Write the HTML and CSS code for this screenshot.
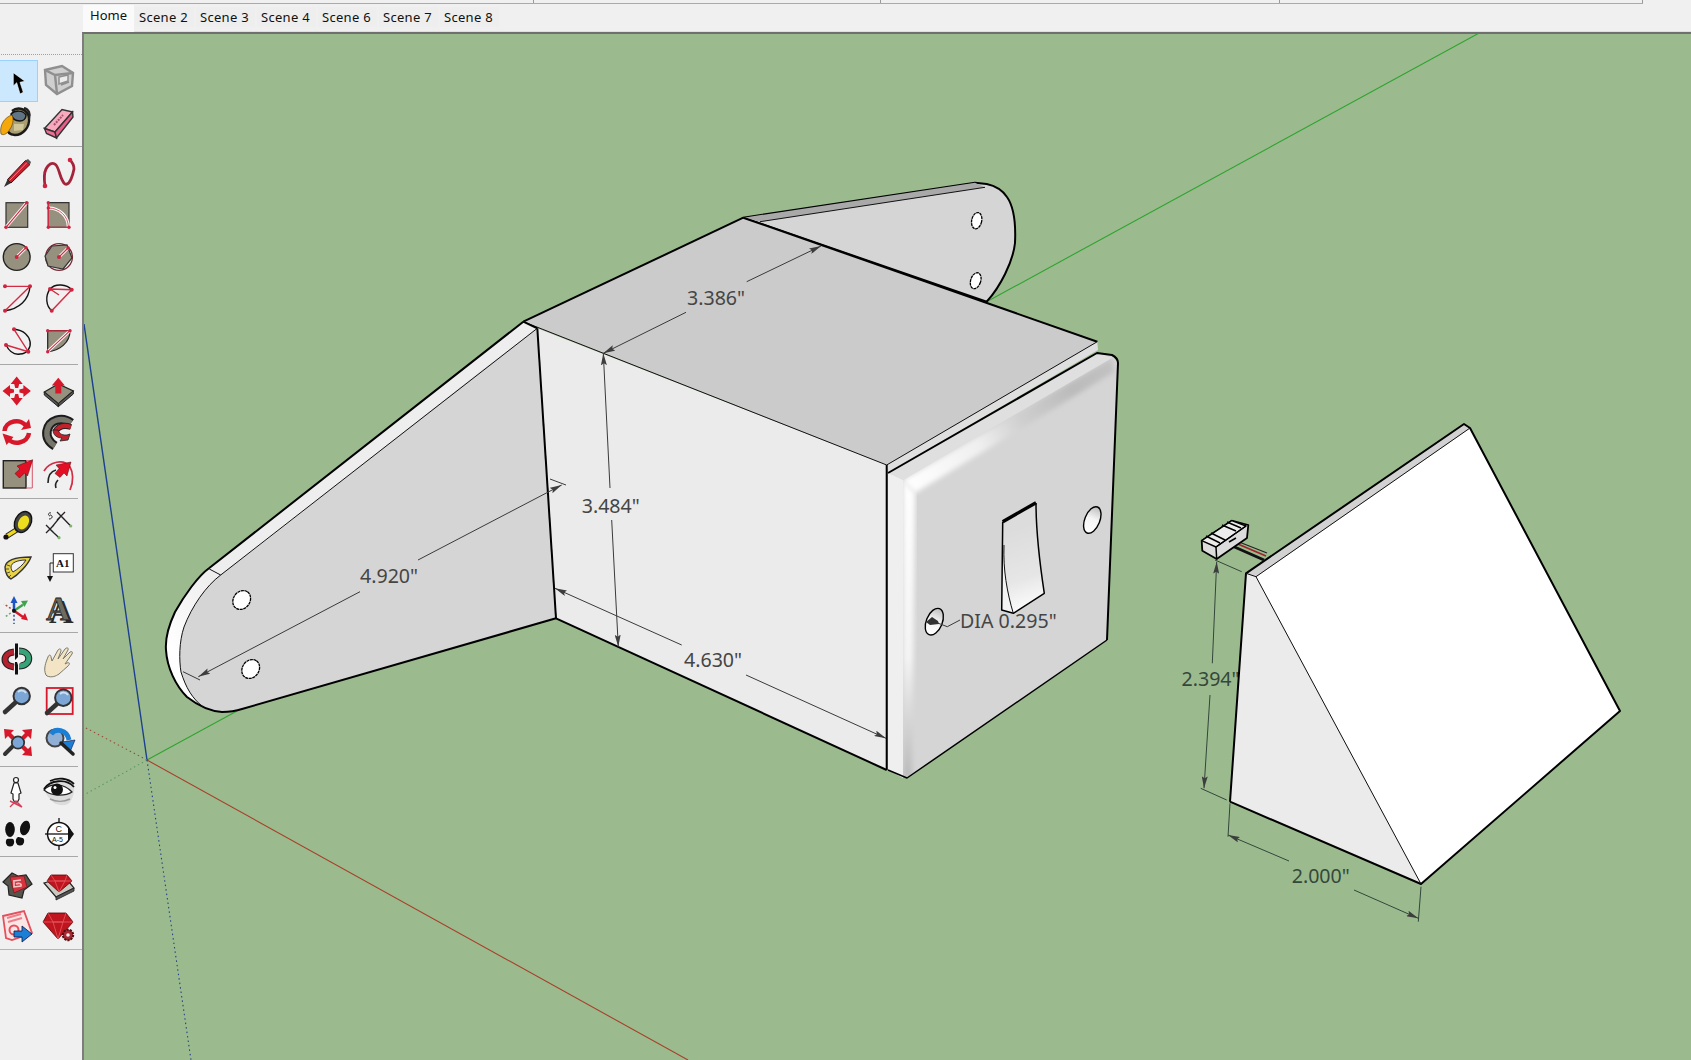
FILE: index.html
```html
<!DOCTYPE html>
<html lang="en">
<head>
<meta charset="utf-8">
<title>SketchUp</title>
<link rel="stylesheet" href="styles.css">
</head>
<body>
<div class="app">
  <header class="top">
    <div class="menuline">
      <span class="mcell mcell-a"></span><span class="mcell mcell-b"></span><span class="mcell mcell-c"></span><span class="mcell mcell-d"></span>
    </div>
    <nav class="tabs">
      <span class="tab tab-active">Home</span>
      <span class="tab">Scene 2</span>
      <span class="tab">Scene 3</span>
      <span class="tab">Scene 4</span>
      <span class="tab">Scene 6</span>
      <span class="tab">Scene 7</span>
      <span class="tab">Scene 8</span>
    </nav>
  </header>
  <div class="main">
    <aside class="toolbar">
      <div class="group">
        <div class="tool active"><svg class="ic" viewBox="0 0 34 34"><path d="M13.300 8.700V22l3.400-3.300L20 30l3.300-1.700-3.300-10 5-1z" fill="#000" stroke="#fff" stroke-width=".6"/></svg></div>
        <div class="tool"><svg class="ic" viewBox="0 0 34 34"><g fill="none" stroke="#8f8f8f" stroke-width="2.400"><path d="M3 6l17-4 11 7-1 13-15 8-11-9z" fill="#cfcfcf"/><path d="M3 6l10 5 18-2M13 11l2 19"/><path d="M17 13l9-2v6l-9 3zM19 21l8-3" stroke-width="1.500" fill="#ececec"/></g></svg></div>
        <div class="tool"><svg class="ic" viewBox="0 0 34 34"><path d="M12 5C18 0 28 3 29 12c1 9-6 17-14 17-6 0-8-4-8-8" fill="#a89e72" stroke="#1a1a1a" stroke-width="2.400"/><path d="M14 18h10l-1 6-9 1z" fill="#cfc69a"/><path d="M11 8c4-4 12-4 15 1 0 4-3 6-6 6-5 0-8-3-9-7z" fill="#5f7485" stroke="#111" stroke-width="1.500"/><path d="M24 2c5 1 7 6 5 11" fill="none" stroke="#222" stroke-width="2"/><path d="M1 28C-1 19 5 11 12 9c2 4 1 10-2 14-2 4-6 7-9 5z" fill="#f4a80b" stroke="#5a3a00" stroke-width=".6"/></svg></div>
        <div class="tool"><svg class="ic" viewBox="0 0 34 34"><path d="M2.500 22.500L20 3.500l10.500 2.500L13 26z" fill="#f8a9bd" stroke="#333" stroke-width="1.400"/><path d="M2.500 22.500L13 26l1.500 6-10-4.500z" fill="#ee6f94" stroke="#333" stroke-width="1.400"/><path d="M13 26L30.500 6l.5 5-16.500 21z" fill="#e85e88" stroke="#333" stroke-width="1.400"/><path d="M12 19l9-10" stroke="#a4546c" stroke-width="2" stroke-dasharray="2 1"/></svg></div>
      </div>
      <div class="group">
        <div class="tool"><svg class="ic" viewBox="0 0 34 34"><path d="M4 31l3.500-7.500 3.500 3.500z" fill="#333"/><path d="M7.500 23.500L25.500 4.500l4.500 4-19 18.500z" fill="#c4202e" stroke="#411" stroke-width="1"/><path d="M9.500 24.500l17.500-18" stroke="#f08090" stroke-width="1"/><path d="M25.500 4.500l2.500-1.500 3 3-1 2.500z" fill="#555"/></svg></div>
        <div class="tool"><svg class="ic" viewBox="0 0 34 34"><path d="M3 30C2 23 2 17 4 13 6 9 10 5 14 9 18 14 18 24 23 28 28 30 31 18 32 13 32 8 30 6 28 4" fill="none" stroke="#a4243b" stroke-width="2.800"/><circle cx="3" cy="30" r="2.300" fill="#d0233f"/><circle cx="28" cy="4" r="2.300" fill="#d0233f"/></svg></div>
        <div class="tool"><svg class="ic" viewBox="0 0 34 34"><rect x="6" y="4.700" width="21.700" height="24.600" fill="#96917f" stroke="#333" stroke-width="1.200"/><path d="M6 29.300L26.700 4.700" stroke="#fff" stroke-width="3"/><path d="M6 29.300L26.700 4.700" stroke="#d22b44" stroke-width="1.200"/><circle cx="6" cy="29.300" r="1.800" fill="#d0233f"/><circle cx="26.700" cy="4.700" r="1.800" fill="#d0233f"/></svg></div>
        <div class="tool"><svg class="ic" viewBox="0 0 34 34"><path d="M6.300 4.700H27v24.600H6.300z" fill="#96917f" stroke="#333" stroke-width="1.200"/><path d="M6.300 10c11 0 20 8 20 19" fill="none" stroke="#fff" stroke-width="3"/><path d="M6.300 10c11 0 20 8 20 19" fill="none" stroke="#d8566a" stroke-width="1"/><path d="M6.300 4.700v24.600H27" fill="none" stroke="#d22b44" stroke-width="1.300"/><g fill="#d0233f"><circle cx="6.300" cy="4.700" r="1.700"/><circle cx="6.300" cy="10" r="1.700"/><circle cx="6.300" cy="29.300" r="1.700"/><circle cx="27" cy="29.300" r="1.700"/></g></svg></div>
        <div class="tool"><svg class="ic" viewBox="0 0 34 34"><circle cx="16.700" cy="17" r="13.400" fill="#96917f" stroke="#222" stroke-width="1.400"/><path d="M16.700 17L26 7.700" stroke="#fff" stroke-width="3"/><path d="M16.700 17L26 7.700" stroke="#d22b44" stroke-width="1.200"/><circle cx="16.700" cy="17" r="2" fill="#d0233f"/><circle cx="26" cy="7.700" r="1.800" fill="#d0233f"/></svg></div>
        <div class="tool"><svg class="ic" viewBox="0 0 34 34"><circle cx="17" cy="17" r="13.400" fill="none" stroke="#7a2a36" stroke-width="1.300"/><path d="M10 6l15-1 5 13-9 11-15-3-3-10z" fill="#96917f" stroke="#333" stroke-width="1.200"/><path d="M17 17l9-9" stroke="#fff" stroke-width="3"/><path d="M17 17l9-9" stroke="#d22b44" stroke-width="1.200"/><circle cx="17" cy="17" r="2" fill="#d0233f"/><circle cx="26" cy="8" r="1.800" fill="#d0233f"/></svg></div>
        <div class="tool"><svg class="ic" viewBox="0 0 34 34"><path d="M30 5.300C29 19 19 28 5 29.700" fill="none" stroke="#111" stroke-width="1.400"/><path d="M5 5.300h25L5 29.700" fill="none" stroke="#d22b44" stroke-width="1.300"/><g fill="#d0233f"><circle cx="5" cy="5.300" r="2"/><circle cx="30" cy="5.300" r="2"/><circle cx="5" cy="29.700" r="2"/></g></svg></div>
        <div class="tool"><svg class="ic" viewBox="0 0 34 34"><path d="M8 8C13 2 25 3 29.700 8.700M8 8C3 15 4 25 9.700 29.700" fill="none" stroke="#111" stroke-width="1.400"/><path d="M8 8l21.700.7L9.700 29.700M8 8l9 6" fill="none" stroke="#d22b44" stroke-width="1.500"/><g fill="#d0233f"><circle cx="8" cy="8" r="2"/><circle cx="29.700" cy="8.700" r="2"/><circle cx="9.700" cy="29.700" r="2"/></g></svg></div>
        <div class="tool"><svg class="ic" viewBox="0 0 34 34"><path d="M14 6.300C34 8 35 30 20 31 14 32 9 28 6 22" fill="none" stroke="#111" stroke-width="1.400"/><path d="M14 6.300l14.300 22.400L6 22" fill="none" stroke="#d22b44" stroke-width="1.400"/><g fill="#d0233f"><circle cx="14" cy="6.300" r="2"/><circle cx="28.300" cy="28.700" r="2"/><circle cx="6" cy="22" r="2"/></g></svg></div>
        <div class="tool"><svg class="ic" viewBox="0 0 34 34"><path d="M5.700 7.700H28C28 19 18 28 5.700 28.700z" fill="#96917f" stroke="#222" stroke-width="1.200"/><path d="M5.700 28.700L28 7.700" stroke="#fff" stroke-width="3"/><path d="M5.700 28.700L28 7.700M5.700 7.700H28" stroke="#d22b44" stroke-width="1.100"/><g fill="#d0233f"><circle cx="5.700" cy="7.700" r="1.700"/><circle cx="28" cy="7.700" r="1.700"/><circle cx="5.700" cy="28.700" r="1.700"/></g></svg></div>
      </div>
      <div class="group">
        <div class="tool"><svg class="ic" viewBox="0 0 34 34"><g fill="#d7182a"><path d="M16.700 2.500l6 7.500h-3.500l-1 4h-3l-1-4h-3.500z"/><path d="M16.700 31.500l6-7.500h-3.500l-1-4h-3l-1 4h-3.500z"/><path d="M2.500 17l7.500-6v3.500l4 1v3l-4 1v3.500z"/><path d="M30.900 17l-7.500-6v3.500l-4 1v3l4 1v3.500z"/></g></svg></div>
        <div class="tool"><svg class="ic" viewBox="0 0 34 34"><path d="M2.300 18l14-8 15 7-15 12.700z" fill="#96917f" stroke="#222" stroke-width="1.200"/><path d="M2.300 18v3l14 11.700v-3zM16.300 29.700v3l15-12.700v-3z" fill="#555" stroke="#222" stroke-width="1"/><path d="M16.300 3.700l6.500 7.800h-3.500v8h-6v-8H9.800z" fill="#d7182a"/></svg></div>
        <div class="tool"><svg class="ic" viewBox="0 0 34 34"><path d="M4.500 16C5 6 21 2 27 12" fill="none" stroke="#d7182a" stroke-width="4.500"/><path d="M21 15l10-2-2-9z" fill="#d7182a"/><path d="M29 18C28 28 12 32 7 22" fill="none" stroke="#d7182a" stroke-width="4.500"/><path d="M2.500 18.500l11 3.500-7 8z" fill="#d7182a"/></svg></div>
        <div class="tool"><svg class="ic" viewBox="0 0 34 34"><path d="M29 8C20 1 7 5 5 16c-1 7 3 12 8 15" fill="none" stroke="#1c1c1c" stroke-width="9.500"/><path d="M29 8C20 1 7 5 5 16c-1 7 3 12 8 15" fill="none" stroke="#77766a" stroke-width="5.500"/><path d="M13 17c4-7 10-7 16-5" fill="none" stroke="#222" stroke-width="6"/><path d="M13 17c4-7 10-7 16-5" fill="none" stroke="#c3202b" stroke-width="4"/><path d="M11 15c0 5 4 8 9 8l-2 3 8-1 2-6-3 1c-4 0-7 0-9-5z" fill="#c3202b" stroke="#222" stroke-width=".8"/></svg></div>
        <div class="tool"><svg class="ic" viewBox="0 0 34 34"><rect x="3.300" y="3.700" width="22.700" height="27.300" fill="#96917f" stroke="#222" stroke-width="1.400"/><path d="M26 3.700h6.300V31H26" fill="none" stroke="#d8566a" stroke-width="1"/><path d="M32.700 2.700L17 9l3 3-5 4.500 4.500 4.500 5-5 3 3z" fill="#e30f24" stroke="#411" stroke-width=".5"/></svg></div>
        <div class="tool"><svg class="ic" viewBox="0 0 34 34"><path d="M2 14C7 5 22 1 28 10c3 5 4 14 0 23" fill="none" stroke="#d22b44" stroke-width="1.700"/><path d="M6 26c0-8 4-12 8-13M14 31c-1-3 0-6 2-8" fill="none" stroke="#222" stroke-width="1.600"/><path d="M29 5L14 8l3 3.500-4 5 5 4 4-4.500 3 3z" fill="#e30f24" stroke="#411" stroke-width=".5"/></svg></div>
      </div>
      <div class="group group-low">
        <div class="tool"><svg class="ic" viewBox="0 0 34 34"><path d="M7 27L18 20" stroke="#222" stroke-width="5.500"/><path d="M7 27L18 20" stroke="#eed71c" stroke-width="3.500"/><circle cx="6" cy="28" r="2.600" fill="#111"/><ellipse cx="23" cy="13" rx="8" ry="11" transform="rotate(28 23 13)" fill="#444" stroke="#111" stroke-width="1.400"/><ellipse cx="23.500" cy="13.500" rx="5" ry="7.500" transform="rotate(28 23.500 13.500)" fill="#ecde1e"/></svg></div>
        <div class="tool"><svg class="ic" viewBox="0 0 34 34"><path d="M8 20.300L19 7M4 16l8 8M4 24l8-8M15 11l8-8M15 3l8 8M19 7l9.700 10M8 20.300L17 28.700" stroke="#222" stroke-width="1.300" fill="none"/><path d="M8 7c-3-1-1-4 1-3M8 6c3 0 3 4-1 4" fill="none" stroke="#222" stroke-width="1"/><circle cx="28.700" cy="17" r="1.600" fill="#7fb46f"/><circle cx="17" cy="28.700" r="1.600" fill="#7fb46f"/></svg></div>
        <div class="tool"><svg class="ic" viewBox="0 0 34 34"><path d="M31 7C18 7 6 9 5 17c0 6 3 11 6 12C18 25 28 15 31 7z" fill="#e8d348" stroke="#333" stroke-width="1.400"/><path d="M26 10C17 10 11 13 11 17c0 2 1 4 2 5 5-3 10-7 13-12z" fill="#f2f2f2" stroke="#333" stroke-width="1"/><path d="M7 15l3 1M6 19l3 0M7 23l3-1M9 27l2-2" stroke="#333" stroke-width=".8"/></svg></div>
        <div class="tool"><svg class="ic" viewBox="0 0 34 34"><rect x="11.300" y="3.700" width="20" height="18.300" fill="#fff" stroke="#333" stroke-width="1"/><text class="ic-a1" x="14" y="16.500">A1</text><path d="M11.300 13H8v14" fill="none" stroke="#222" stroke-width="1"/><path d="M5 26h6l-3 6z" fill="#111"/></svg></div>
        <div class="tool"><svg class="ic" viewBox="0 0 34 34"><path d="M14 18.700L4 12" stroke="#b34a3a" stroke-width="1.500" stroke-dasharray="2 2"/><path d="M14 18.700L5 25" stroke="#6ea26a" stroke-width="1.500" stroke-dasharray="2 2"/><path d="M14 18.700V32" stroke="#2d4f9a" stroke-width="1.500" stroke-dasharray="2 2"/><path d="M14 18.700V9" stroke="#1d55c4" stroke-width="2.500"/><path d="M10.500 11L14 4l3.500 7z" fill="#1d55c4"/><path d="M14 18.700l9-6" stroke="#3fa24e" stroke-width="2.500"/><path d="M21 9l7-.5-3.500 6.500z" fill="#3fa24e"/><path d="M14 18.700L23 25" stroke="#d7182a" stroke-width="2.500"/><path d="M25 21l3 7.500-7-1.500z" fill="#d7182a"/><circle cx="14" cy="18.700" r="2" fill="#111"/></svg></div>
        <div class="tool"><svg class="ic" viewBox="0 0 34 34"><text class="ic-3d ic-3d-back" x="7" y="31">A</text><text class="ic-3d ic-3d-front" x="4" y="28">A</text></svg></div>
      </div>
      <div class="group">
        <div class="tool"><svg class="ic" viewBox="0 0 34 34"><path d="M14 10C2 11 2 24 14 25" fill="none" stroke="#222" stroke-width="7"/><path d="M14 10C2 11 2 24 14 25" fill="none" stroke="#b7202f" stroke-width="4.800"/><path d="M19 9C32 9 32 24 19 24" fill="none" stroke="#222" stroke-width="7"/><path d="M19 9C32 9 32 24 19 24" fill="none" stroke="#37a377" stroke-width="4.800"/><path d="M16.500 1.500V32.500" stroke="#111" stroke-width="3"/><path d="M13 20l5-5 1 4 5-2-6 6-1-3z" fill="#f6f6f6"/></svg></div>
        <div class="tool"><svg class="ic" viewBox="0 0 34 34"><path d="M4 33C1 27 4 20 6 15c1-3 3-2 3 0l1 4 6-11c2-2 3-1 3 1l-3 8 7-10c2-2 4-1 3 1l-5 9 7-7c2-1 3 0 2 2l-7 10 2-1c3-1 3 1 1 3-3 3-6 5-9 8-3 2-7 4-12 2z" fill="#f3e4c6" stroke="#7a7a6a" stroke-width="1"/></svg></div>
        <div class="tool"><svg class="ic" viewBox="0 0 34 34"><path d="M16 19L5 29" stroke="#333" stroke-width="4.500" stroke-linecap="round"/><circle cx="21.700" cy="13" r="8.200" fill="#7ba6d6" stroke="#333" stroke-width="2"/><path d="M18 9c2-2 6-2 8 1" stroke="#cfe0f0" stroke-width="2" fill="none"/></svg></div>
        <div class="tool"><svg class="ic" viewBox="0 0 34 34"><rect x="4.700" y="5" width="26" height="26" fill="none" stroke="#d7182a" stroke-width="1.800"/><path d="M16 20L5 30" stroke="#333" stroke-width="4.500" stroke-linecap="round"/><circle cx="21.300" cy="14.700" r="8.200" fill="#7ba6d6" stroke="#333" stroke-width="2"/><path d="M18 11c2-2 6-2 8 1" stroke="#cfe0f0" stroke-width="2" fill="none"/></svg></div>
        <div class="tool"><svg class="ic" viewBox="0 0 34 34"><g fill="#d7182a"><path d="M4 4l10 1-3 3 3.500 3.500-3 3L8 11l-3 3z"/><path d="M32 4l-10 1 3 3-3.500 3.500 3 3L28 11l3 3z"/><path d="M32 31l-10-1 3-3-3.500-3.500 3-3L28 24l3-3z"/></g><path d="M13 21L5 29" stroke="#333" stroke-width="4" stroke-linecap="round"/><circle cx="18" cy="17.500" r="6.200" fill="#7ba6d6" stroke="#333" stroke-width="1.800"/></svg></div>
        <div class="tool"><svg class="ic" viewBox="0 0 34 34"><circle cx="13" cy="13" r="8.500" fill="#8fb0d4" stroke="#444" stroke-width="2"/><path d="M9 9C13 3 25 4 27 15" fill="none" stroke="#1b7fd6" stroke-width="5"/><path d="M20 17l13-2-5 12z" fill="#1b7fd6" stroke="#114" stroke-width=".6"/><path d="M19 18l12 11" stroke="#222" stroke-width="3.500" stroke-linecap="round"/></svg></div>
      </div>
      <div class="group group-tight">
        <div class="tool"><svg class="ic" viewBox="0 0 34 34"><circle cx="16" cy="5" r="2.500" fill="#fff" stroke="#222" stroke-width="1.200"/><path d="M14 8h4l3 10-2 1v5l-2 4h-2l-2-4v-5l-2-1z" fill="#fff" stroke="#222" stroke-width="1.200"/><path d="M10 32l6-6 6 6M10 26l12 6" fill="none" stroke="#d8405a" stroke-width="1.400"/></svg></div>
        <div class="tool"><svg class="ic" viewBox="0 0 34 34"><path d="M2 14C8 5 24 4 32 10c1 8-2 16-6 19-7 3-14 0-17-4-3-3-6-7-7-11z" fill="#dcdcdc"/><path d="M2 15C8 8 22 8 30 17 24 21 10 22 2 15z" fill="#fff" stroke="#222" stroke-width="1.200"/><circle cx="15" cy="14.500" r="6" fill="#111"/><circle cx="13" cy="12.500" r="1.500" fill="#fff"/><path d="M2 14C8 5 24 3 32 12M8 6c8-4 18-3 24 3" fill="none" stroke="#111" stroke-width="1.800"/><path d="M8 24c6 3 14 3 20 0" fill="none" stroke="#999" stroke-width="1.500"/></svg></div>
        <div class="tool"><svg class="ic" viewBox="0 0 34 34"><ellipse cx="10" cy="12.500" rx="4.800" ry="7.500" fill="#111"/><ellipse cx="10" cy="25" rx="4.200" ry="4.500" fill="#111"/><path d="M6 21h8" stroke="#fff" stroke-width="1.500"/><ellipse cx="25" cy="11" rx="4.800" ry="7.500" fill="#111" transform="rotate(17 25 11)"/><ellipse cx="20" cy="24" rx="4.200" ry="4.500" fill="#111"/><path d="M18 19l8 2" stroke="#fff" stroke-width="1.500"/></svg></div>
        <div class="tool"><svg class="ic" viewBox="0 0 34 34"><circle cx="17" cy="17" r="11.500" fill="#fff" stroke="#111" stroke-width="1.500"/><path d="M3 17h23" stroke="#111" stroke-width="1.300"/><path d="M26 9l6 8-6 8z" fill="#111"/><path d="M17 1v4M17 29v4" stroke="#111" stroke-width="1.300"/><text class="ic-sec" x="13.500" y="15">C</text><text class="ic-sec ic-sec-s" x="10" y="25">A-5</text></svg></div>
      </div>
      <div class="group group-last">
        <div class="tool"><svg class="ic" viewBox="0 0 34 34"><path d="M3 14L12 5l6 3 8-1 6 9-8 6-2 8-13-3-1-9z" fill="#55554c" stroke="#222" stroke-width="1.200"/><path d="M10 9L24 8l3 11-13 6z" fill="#d6333f" stroke="#7a1820" stroke-width=".8"/><path d="M13 13l8-1M14 13v6l7-1c1-3-3-3-5-2" fill="none" stroke="#f6c6c6" stroke-width="1.500"/></svg></div>
        <div class="tool"><svg class="ic" viewBox="0 0 34 34"><path d="M2 15l12 14 18-9-9-11z" fill="#c9c9c0" stroke="#222" stroke-width="1.200"/><path d="M14 29v3l18-9v-3z" fill="#555" stroke="#222" stroke-width=".8"/><path d="M9 7h16l5 6-13 11L5 13z" fill="#c0141f" stroke="#600" stroke-width=".8"/><path d="M9 7l4 6h10l2-6M5 13h25M13 13l4 11 6-11" fill="none" stroke="#e65a62" stroke-width=".8"/></svg></div>
        <div class="tool"><svg class="ic" viewBox="0 0 34 34"><path d="M3 7L24 2l8 22-20 7-6-2z" fill="#fbe6e6" stroke="#e4505c" stroke-width="1.800"/><path d="M7 9l14-4M8 13l14-4" stroke="#ec7f88" stroke-width="2"/><circle cx="14" cy="21" r="4.500" fill="none" stroke="#e4505c" stroke-width="2"/><path d="M14 22h8v-5l10 8-10 8v-5h-8z" fill="#1b7fd6" stroke="#114" stroke-width=".8"/></svg></div>
        <div class="tool"><svg class="ic" viewBox="0 0 34 34"><path d="M6 4h18l7 9-15 17L1 13z" fill="#c0141f" stroke="#500" stroke-width=".8"/><path d="M6 4l5 9h10l3-9M1 13h30M11 13l5 17 5-17" fill="none" stroke="#e65a62" stroke-width=".8"/><circle cx="26" cy="26" r="5.200" fill="#a62a33" stroke="#511" stroke-width="2" stroke-dasharray="2.200 1"/><circle cx="26" cy="26" r="1.800" fill="#eee"/></svg></div>
      </div>
    </aside>
    <main class="canvas">
      <svg class="scene" viewBox="84 34 1607 1026" role="img" aria-label="3D model view">
        <defs>
          <marker id="arr" viewBox="0 0 12 6" markerWidth="12" markerHeight="6" refX="12" refY="3" orient="auto-start-reverse" markerUnits="userSpaceOnUse">
            <path d="M0 0L12 3 0 6 2 3z" class="arrowhead"/>
          </marker>
          <linearGradient id="rim" gradientUnits="userSpaceOnUse" x1="165" y1="640" x2="225" y2="600">
            <stop offset="0" stop-color="#ffffff"/><stop offset="1" stop-color="#eeeeee"/>
          </linearGradient>
          <linearGradient id="chamTop" gradientUnits="userSpaceOnUse" x1="903" y1="480" x2="1114" y2="365">
            <stop offset="0" stop-color="#ffffff"/><stop offset=".35" stop-color="#efefef"/><stop offset=".55" stop-color="#cfcfcf"/><stop offset=".8" stop-color="#bbbbbb"/><stop offset="1" stop-color="#c2c2c2"/>
          </linearGradient>
          <linearGradient id="chamLeft" gradientUnits="userSpaceOnUse" x1="903" y1="480" x2="903" y2="778">
            <stop offset="0" stop-color="#ffffff"/><stop offset=".6" stop-color="#f4f4f4"/><stop offset="1" stop-color="#b9b9b9"/>
          </linearGradient>
          <linearGradient id="rocker" gradientUnits="userSpaceOnUse" x1="1010" y1="530" x2="1036" y2="610">
            <stop offset="0" stop-color="#dcdcdc"/><stop offset=".6" stop-color="#e6e6e6"/><stop offset="1" stop-color="#ffffff"/>
          </linearGradient>
          <linearGradient id="hole" x1="0" y1="0" x2="0" y2="1">
            <stop offset="0" stop-color="#bdbdbd"/><stop offset=".45" stop-color="#f5f5f5"/><stop offset="1" stop-color="#ffffff"/>
          </linearGradient>
          <filter id="soft" x="-10%" y="-10%" width="120%" height="120%"><feGaussianBlur stdDeviation="2.500"/></filter>
          <clipPath id="plateClip"><polygon points="903,480 1112,358 1118,363 1107,640 907,778 903,778"/></clipPath>
        </defs>

        <!-- axes -->
        <line class="ax ax-green" x1="147" y1="760" x2="1481" y2="32"/>
        <line class="ax ax-red" x1="147" y1="760" x2="688" y2="1060"/>
        <line class="ax ax-blue" x1="147" y1="760" x2="84" y2="324"/>
        <line class="ax ax-dot ax-dot-red" x1="147" y1="760" x2="84" y2="727"/>
        <line class="ax ax-dot ax-dot-green" x1="147" y1="760" x2="84" y2="795"/>
        <line class="ax ax-dot ax-dot-blue" x1="147" y1="760" x2="191" y2="1060"/>

        <!-- back fin -->
        <path class="face-fin edge" d="M743.300 217.700L975 182.700 986.700 184C996 186 1003 191 1007 197 1014 207 1016 222 1015 243 1013 262 1000 287 986.700 301.700Z"/>
        <polygon class="face-dark" points="743.300,217.700 975,182.700 985,187.300 760,221.700"/>
        <line class="edge-thin" x1="760" y1="221.700" x2="985" y2="187.300"/>
        <ellipse class="hole-white" cx="976.700" cy="220.700" rx="5" ry="8.200" transform="rotate(12 976.700 220.700)"/>
        <ellipse class="hole-white" cx="975.700" cy="280.700" rx="5" ry="8.200" transform="rotate(18 975.700 280.700)"/>

        <!-- left fin -->
        <path class="face-rim" d="M523.300 321.700L209.300 568C198 576 184 596 175 612 168 627 165 638 166 650 167 668 176 686 187 697 196 704 208 711 222 712 230 712 236 711 242 709L556 618.300 537.300 328.300Z"/>
        <path class="face-fin" d="M537.300 328.300L480 371.700 266.700 540 220 575C206 586 192 606 184 627 179 642 179 660 181 672 186 688 192 698 202 706 210 711 218 712 226 712 232 712 238 711 242 709L556 618.300Z"/>
        <path class="edge no-fill" d="M523.300 321.700L209.300 568C198 576 184 596 175 612 168 627 165 638 166 650 167 668 176 686 187 697 196 704 208 711 222 712 230 712 236 711 242 709L556 618.300"/>
        <path class="edge-thin" d="M537.300 328.300L220.700 575C206 586 192 606 184 627 179 642 179 660 181 672 186 688 192 698 203 707"/>
        <line class="edge-thin" x1="209.300" y1="569" x2="220.700" y2="575"/>
        <ellipse class="hole-white" cx="241.700" cy="600" rx="10" ry="8.300" transform="rotate(-55 241.700 600)"/>
        <ellipse class="hole-white" cx="250.700" cy="669" rx="10" ry="8.300" transform="rotate(-55 250.700 669)"/>

        <!-- box body -->
        <polygon class="face-top" points="523.300,321.700 743.300,217.700 1097.300,341.700 886.700,465"/>
        <polygon class="face-side" points="537.300,328.300 886.700,465 886.700,770 556,618.300"/>
        <line class="edge-thin" x1="523.300" y1="321.700" x2="886.700" y2="465"/>
        <line class="edge" x1="523.300" y1="321.700" x2="537.300" y2="328.300"/>
        <line class="edge" x1="523.300" y1="321.700" x2="743.300" y2="217.700"/>
        <line class="edge" x1="743.300" y1="217.700" x2="1097.300" y2="341.700"/>
        <line class="edge" x1="537.300" y1="328.300" x2="556" y2="618.300"/>
        <line class="edge" x1="556" y1="618.300" x2="886.700" y2="770"/>

        <!-- face plate -->
        <polygon class="face-strip" points="886.700,465 1097.300,341.700 1098,350 888,473"/>
        <line class="edge-thin" x1="886.700" y1="465" x2="1097.300" y2="341.700"/>
        <polygon class="face-fin" points="888,473 1097,353 1112,355 1118,363 1107,640 907,778 888,770"/>
        <polygon class="face-strip" points="888,473 1097,353 1112,358 903,480"/>
        <polygon class="face-band" points="888,473 903,480 903,778 888,770"/>
        <g clip-path="url(#plateClip)">
          <polygon class="cham-top" filter="url(#soft)" points="903,480 1112,358 1114,372 915,493"/>
          <polygon class="cham-left" filter="url(#soft)" points="903,480 915,493 912,777 903,778"/>
        </g>
        <path class="edge no-fill" d="M888 473L1097 353 1112 355Q1118 358 1118 363L1107 640"/>
        <path class="edge-mid no-fill" d="M1107 640L907 778 888 770"/>
        <line class="edge" x1="886.700" y1="465" x2="886.700" y2="770"/>

        <!-- rocker switch -->
        <path class="face-sliver" d="M1002.700 521.700L1001.700 610 1013.300 613.300C1006 595 1003 560 1002.700 521.700Z"/>
        <path class="face-rocker" d="M1004 524L1036 504C1036 536 1040 565 1044.300 593.300L1013.300 613.300C1007 590 1003 565 1004 524Z"/>
        <path class="edge-mid no-fill" d="M1002.700 521.700L1001.700 610 1013.300 613.300 1044.300 593.300C1040 565 1036 536 1036 503"/>
        <line class="edge-heavy" x1="1002.700" y1="521.700" x2="1036" y2="502.700"/>
        <path class="edge-thin no-fill" d="M1004 545C1003 570 1007 592 1013.300 613.300"/>

        <!-- plate holes -->
        <ellipse class="hole-shade" cx="1092.300" cy="520" rx="7.500" ry="14" transform="rotate(22 1092.300 520)"/>
        <ellipse class="hole-shade" cx="934.300" cy="621.700" rx="8" ry="14" transform="rotate(22 934.300 621.700)"/>

        <!-- label that the wedge partly hides -->
        <text class="dim-text dim-text-green" x="1181.500" y="686">2.394"</text>

        <!-- wedge -->
        <polygon class="face-white" points="1256,576.700 1470,428 1620,711 1421,884"/>
        <polygon class="face-side" points="1246,573.300 1256,576.700 1421,884 1230,801.700"/>
        <polygon class="face-strip2" points="1246,573.300 1464,424 1470,428 1256,576.700"/>
        <path class="edge no-fill" d="M1230 801.700L1246 573.300 1464 424 1470 428 1620 711 1421 884 1230 801.700"/>
        <path class="edge-thin no-fill" d="M1470 428L1256 576.700 1421 884M1246 573.300L1256 576.700"/>

        <!-- connector with wires -->
        <path class="wire-black" d="M1230 545L1264 560"/>
        <path class="wire-red" d="M1232 541.500L1266 556"/>
        <path class="wire-black2" d="M1234 540L1267 553"/>
        <polygon class="conn-body" points="1201.700,540.700 1231.700,520.700 1248.300,525 1247,538 1216.700,559 1202.300,550.700"/>
        <polygon class="conn-top" points="1201.700,540.700 1231.700,520.700 1246,526 1216,547"/>
        <path class="edge-mid no-fill" d="M1216 547L1216.700 559M1216 547L1246 526M1206 536l14 7M1211 533l14 7M1222 525l14 6M1227 522l14 6M1229 542l7-4"/>

        <!-- dimensions -->
        <g class="dims">
          <line class="dim" x1="360" y1="591.700" x2="198.300" y2="676.700" marker-end="url(#arr)"/>
          <line class="dim" x1="418" y1="560" x2="561.700" y2="485" marker-end="url(#arr)"/>
          <path class="dim" d="M183 671.700L200 680M550 479L566 485"/>
          <line class="dim" x1="686" y1="312.300" x2="603.300" y2="353.300" marker-end="url(#arr)"/>
          <line class="dim" x1="746.700" y1="281.700" x2="821" y2="246" marker-end="url(#arr)"/>
          <line class="dim" x1="610" y1="488" x2="603.300" y2="353.300" marker-end="url(#arr)"/>
          <line class="dim" x1="611.700" y1="520" x2="618.300" y2="646.700" marker-end="url(#arr)"/>
          <line class="dim" x1="681.700" y1="645" x2="555" y2="588.300" marker-end="url(#arr)"/>
          <line class="dim" x1="746" y1="675" x2="886" y2="738.300" marker-end="url(#arr)"/>
          <path class="dim" d="M947.300 626.700L960 620M935 622L947.300 626.700"/>
          <path class="arrow-fill" d="M926 622l6-5 6 4 1 3-9 1z"/>
          <line class="dim dim-green" x1="1212.300" y1="663.300" x2="1216.700" y2="561.700" marker-end="url(#arr)"/>
          <line class="dim dim-green" x1="1210" y1="695" x2="1204" y2="788.300" marker-end="url(#arr)"/>
          <path class="dim dim-green" d="M1215 560L1241.700 571.700M1200.700 788.300L1226.700 800M1230 803.300L1228 836.700M1421 886.700L1418.300 921.700"/>
          <line class="dim dim-green" x1="1289" y1="861" x2="1228" y2="835" marker-end="url(#arr)"/>
          <line class="dim dim-green" x1="1354" y1="890" x2="1418.300" y2="918.300" marker-end="url(#arr)"/>
          <text class="dim-text" x="360" y="583">4.920"</text>
          <text class="dim-text" x="687" y="305">3.386"</text>
          <text class="dim-text" x="581.700" y="512.700">3.484"</text>
          <text class="dim-text" x="684" y="667">4.630"</text>
          <text class="dim-text" x="960" y="627.700">DIA 0.295"</text>
          <text class="dim-text dim-text-green" x="1291.700" y="883">2.000"</text>
        </g>
      </svg>
    </main>
  </div>
</div>
</body>
</html>
```
FILE: styles.css
```css
* { box-sizing: border-box; }
html, body { margin: 0; height: 100%; overflow: hidden; }
body { background: #f0f0f0; font-family: "Noto Sans", "Liberation Sans", sans-serif; color: #111; }
.app { display: flex; flex-direction: column; width: 1691px; height: 1060px; }

/* top: remnant of the menu row + scene tabs */
.top { height: 32px; flex: none; }
.menuline { display: flex; height: 4px; width: 1643px; border-bottom: 1px solid #aaa; }
.mcell { border-right: 1px solid #9a9a9a; }
.mcell-a { width: 534px; }
.mcell-b { width: 347px; }
.mcell-c { width: 399px; }
.mcell-d { width: 363px; }

.tabs { display: flex; align-items: flex-start; gap: 2px; margin-top: 1px; margin-left: 83px; height: 27px; border-bottom: 1px solid #dfdfdf; }
.tab { width: 59px; height: 20px; margin-top: 2px; padding-left: 4px; font-size: 13px; line-height: 20px; letter-spacing: .3px; background: #eeeeee; white-space: nowrap; }
.tab-active { width: 51px; height: 27px; margin-top: 0; margin-right: -1px; padding-left: 7px; letter-spacing: 0; line-height: 21px; background: #fafafa; }

.main { flex: 1; display: flex; min-height: 0; }

/* left toolbar */
.toolbar { width: 82px; flex: none; padding-top: 22px; overflow: hidden; background: #f0f0f0; }
.group { display: grid; grid-template-columns: repeat(2, 42px); grid-auto-rows: 41.7px; margin-left: -4px; padding: 5px 0 3px; border-bottom: 1px solid #a8a8a8; width: 82px; }
.group:first-child { border-top: 1px dotted #a0a0a0; width: 86px; }
.group-low { padding: 6px 0 2px; }
.group-tight { padding: 4.500px 0 1.500px; }
.group-last { padding: 6.500px 0 1.500px; border-bottom-color: #b5b5b5; width: 86px; }
.tool { display: flex; align-items: center; justify-content: center; }
.tool.active { background: #cce8ff; border: 1px solid #99d1ff; }
.ic { width: 34px; height: 34px; flex: none; overflow: visible; }
.ic-a1 { font-family: "Liberation Serif", serif; font-weight: 700; font-size: 11px; fill: #111; }
.ic-3d { font-family: "Liberation Serif", serif; font-weight: 700; font-size: 34px; }
.ic-3d-back { fill: #2b2b2b; }
.ic-3d-front { fill: #6e6b60; stroke: #222; stroke-width: .8; }
.ic-sec { font-family: "Liberation Sans", sans-serif; font-size: 9px; fill: #111; }
.ic-sec-s { font-size: 7px; }

/* 3D viewport */
.canvas { flex: 1; min-width: 0; background: #9bbb8f; border-left: 2px solid #7d7d7d; border-top: 2px solid #6f6f6f; overflow: hidden; }
.scene { display: block; width: 1607px; height: 1026px; }

.ax { fill: none; stroke-width: 1.100; }
.ax-green { stroke: #2fa32f; }
.ax-red { stroke: #a8402a; }
.ax-blue { stroke: #1c3f8f; stroke-width: 1.400; }
.ax-dot { stroke-dasharray: 1.500 3; }
.ax-dot-red { stroke: #94503a; }
.ax-dot-green { stroke: #5d9a5d; }
.ax-dot-blue { stroke: #25408a; }

.edge { stroke: #000; stroke-width: 2; stroke-linejoin: round; }
.edge-mid { stroke: #000; stroke-width: 1.500; stroke-linejoin: round; }
.edge-heavy { stroke: #000; stroke-width: 3.400; }
.edge-thin { stroke: #111; stroke-width: 1; fill: none; }
.no-fill { fill: none; }

.face-fin { fill: #d5d5d5; }
.face-dark { fill: #a9a9a9; }
.face-rim { fill: url(#rim); }
.face-top { fill: #cbcbcb; }
.face-side { fill: #ebebec; }
.face-strip { fill: #dfdfdf; }
.face-strip2 { fill: #d2d2d2; }
.face-band { fill: #efefef; }
.face-white { fill: #ffffff; }
.face-sliver { fill: #f4f4f4; }
.face-rocker { fill: url(#rocker); }
.cham-top { fill: url(#chamTop); }
.cham-left { fill: url(#chamLeft); }

.hole-white { fill: #fff; stroke: #000; stroke-width: 1.300; stroke-dasharray: 3 .6; }
.hole-shade { fill: url(#hole); stroke: #000; stroke-width: 1.400; }

.wire-black { stroke: #111; stroke-width: 3; fill: none; }
.wire-black2 { stroke: #222; stroke-width: 1.200; fill: none; }
.wire-red { stroke: #a3232c; stroke-width: 1.800; fill: none; }
.conn-body { fill: #dcdcdc; stroke: #000; stroke-width: 1.800; stroke-linejoin: round; }
.conn-top { fill: #ececec; stroke: #000; stroke-width: 1.400; stroke-linejoin: round; }

.dim { fill: none; stroke: #3a3a3a; stroke-width: 1; }
.dim-green { stroke: #32463a; }
.arrowhead { fill: #3d3d3d; }
.arrow-fill { fill: #333; }
.dim-text { font-family: "Noto Sans", "Liberation Sans", sans-serif; font-size: 19.600px; fill: #454545; }
.dim-text-green { fill: #34483a; }
```
